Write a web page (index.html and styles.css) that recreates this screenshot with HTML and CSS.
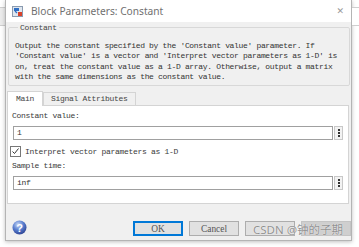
FILE: index.html
```html
<!DOCTYPE html>
<html lang="en">

<head>
    <meta charset="UTF-8">
    <meta name="viewport" content="width=device-width, initial-scale=1.0">
    <title>Block Parameters: Constant</title>
    <link rel="stylesheet" href="styles.css">
</head>

<body>
    <div class="desk">
        <div class="side side-left"></div>

        <div class="dialog">
            <div class="titlebar">
                <svg class="title-icon" width="11" height="11" viewBox="0 0 11 11">
                    <rect x="0.5" y="0.5" width="10" height="10" fill="#dfe6ee" stroke="#8a9bb0"/>
                    <path d="M2 2h5v3H2z" fill="#2f6fc4"/>
                    <path d="M3 5l2 2" stroke="#2f6fc4" stroke-width="1.2"/>
                    <rect x="6" y="6" width="4" height="4" fill="#d9422b"/>
                </svg>
                <span class="title-text">Block Parameters: Constant</span>
                <span class="close">&#x2715;</span>
            </div>

            <div class="body">
                <fieldset class="group">
                    <legend>Constant</legend>
                    <p class="desc">Output the constant specified by the 'Constant value' parameter. If
'Constant value' is a vector and 'Interpret vector parameters as 1-D' is
on, treat the constant value as a 1-D array. Otherwise, output a matrix
with the same dimensions as the constant value.</p>
                </fieldset>

                <div class="tabs">
                    <div class="tab active">Main</div>
                    <div class="tab">Signal Attributes</div>
                </div>

                <div class="pane">
                    <div class="field-label">Constant value:</div>
                    <div class="field-row">
                        <div class="input">1</div>
                        <div class="more"><span></span><span></span><span></span></div>
                    </div>

                    <div class="check-row">
                        <span class="checkbox">
                            <svg width="9" height="9" viewBox="0 0 9 9">
                                <path d="M1.5 4.5l2 2 4-5" fill="none" stroke="#333" stroke-width="1"/>
                            </svg>
                        </span>
                        <span>Interpret vector parameters as 1-D</span>
                    </div>

                    <div class="field-label">Sample time:</div>
                    <div class="field-row">
                        <div class="input">inf</div>
                        <div class="more"><span></span><span></span><span></span></div>
                    </div>
                </div>

                <div class="footer">
                    <svg class="help-icon" width="15" height="15" viewBox="0 0 15 15">
                        <defs>
                            <radialGradient id="hg" cx="0.4" cy="0.3" r="0.75">
                                <stop offset="0" stop-color="#c9d8f5"/>
                                <stop offset="0.5" stop-color="#5a7fd0"/>
                                <stop offset="1" stop-color="#2a3f8f"/>
                            </radialGradient>
                        </defs>
                        <circle cx="7.5" cy="7.5" r="7" fill="url(#hg)"/>
                        <text x="7.5" y="11.5" text-anchor="middle" font-family="Liberation Sans, sans-serif" font-size="11" font-weight="bold" fill="#fff">?</text>
                    </svg>
                    <div class="buttons">
                        <div class="btn default">OK</div>
                        <div class="btn">Cancel</div>
                        <div class="btn"></div>
                        <div class="btn disabled"></div>
                    </div>
                    <div class="watermark">CSDN @钟的子期</div>
                </div>
            </div>
        </div>

        <div class="side side-right"></div>
    </div>
</body>

</html>
```

FILE: styles.css
```css
body {
    margin: 0;
    padding: 0;
    background: #fff;
    font-family: "Liberation Mono", monospace;
    color: #333;
}

.desk {
    display: flex;
    width: 359px;
    height: 247px;
    overflow: hidden;
}

.side {
    border-top: 1px solid #cfcfcf;
    border-bottom: 1px solid #cfcfcf;
    margin-top: 7px;
    box-sizing: border-box;
    height: 19px;
}

.side-left {
    width: 5px;
    background: #ececec;
}

.side-right {
    flex: 1;
    background: #fff;
}

.dialog {
    width: 347px;
    height: 241px;
    border: 1px solid #b4b4b4;
    border-top: none;
    box-sizing: border-box;
    background: #f0f0f0;
    display: flex;
    flex-direction: column;
    box-shadow: 0 1px 4px rgba(0, 0, 0, 0.25);
}

.titlebar {
    height: 22px;
    background: #fff;
    display: flex;
    align-items: center;
    padding-left: 6px;
    font-family: "Noto Sans", sans-serif;
}

.title-icon {
    margin-right: 8px;
}

.title-text {
    font-size: 10.2px;
    color: #707070;
    flex: 1;
}

.close {
    font-family: "DejaVu Sans", sans-serif;
    font-size: 9px;
    color: #999;
    margin-right: 7px;
}

.body {
    flex: 1;
    display: flex;
    flex-direction: column;
    position: relative;
}

.group {
    margin: 1px 1px 0 2px;
    padding: 4px 0 0 6px;
    border: 1px solid #d8d8d8;
    border-radius: 2px;
    height: 63px;
    box-sizing: border-box;
}

.group legend {
    font-size: 8px;
    letter-spacing: -0.2px;
    padding: 0 2px;
    margin-left: 3px;
    color: #444;
}

.desc {
    margin: 5px 0 0 0;
    font-size: 8px;
    letter-spacing: -0.33px;
    line-height: 10.3px;
    white-space: pre;
    color: #333;
}

.tabs {
    display: flex;
    margin: 5px 0 0 1px;
    height: 14px;
    align-items: flex-end;
}

.tab {
    font-size: 8px;
    letter-spacing: -0.3px;
    padding: 0 7px;
    height: 12px;
    line-height: 12px;
    border: 1px solid #d4d4d4;
    border-bottom: none;
    background: #f0f0f0;
    color: #444;
}

.tab.active {
    height: 14px;
    line-height: 14px;
    padding: 0 8px;
    background: #fff;
    position: relative;
    z-index: 1;
    margin-bottom: -1px;
}

.pane {
    margin: 0 2px 0 1px;
    height: 99px;
    box-sizing: border-box;
    background: #fff;
    border: 1px solid #d4d4d4;
    padding: 4px 5px 0 4px;
    font-size: 8px;
    letter-spacing: -0.3px;
    color: #3a3a3a;
}

.field-label {
    height: 11px;
    line-height: 11px;
}

.field-row {
    display: flex;
    align-items: center;
    gap: 1px;
    margin-top: 5px;
}

.input {
    flex: 1;
    height: 14px;
    line-height: 12px;
    box-sizing: border-box;
    border: 1px solid #a0a0a0;
    padding-left: 3px;
    margin-left: 1px;
    color: #333;
}

.more {
    width: 7px;
    height: 12px;
    border: 1px solid #c8c8c8;
    background: #f2f2f2;
    display: flex;
    flex-direction: column;
    align-items: center;
    justify-content: center;
    gap: 1px;
}

.more span {
    width: 2px;
    height: 2px;
    background: #333;
}

.check-row {
    display: flex;
    align-items: center;
    gap: 4px;
    margin: 6px 0 3px -2px;
    height: 11px;
}

.checkbox {
    width: 9px;
    height: 9px;
    border: 1px solid #777;
    background: #fff;
    display: flex;
}

.footer {
    flex: 1;
    display: flex;
    align-items: flex-end;
    padding: 0 0 4px 6px;
}

.help-icon {
    margin-bottom: 1px;
}

.buttons {
    display: flex;
    gap: 6px;
    margin-left: auto;
    margin-right: 0;
}

.btn {
    width: 50px;
    height: 15px;
    box-sizing: border-box;
    border: 1px solid #adadad;
    background: #e1e1e1;
    font-family: "Liberation Serif", serif;
    font-size: 9.4px;
    color: #555;
    display: flex;
    align-items: center;
    justify-content: center;
}

.btn.default {
    border: 1px solid #0078d7;
    box-shadow: inset 0 0 0 1px #0078d7;
}

.btn.disabled {
    background: #cfcfcf;
    border-color: #c4c4c4;
}

.watermark {
    position: absolute;
    right: 8px;
    bottom: 3px;
    font-family: "Noto Sans", "Noto Sans CJK SC", sans-serif;
    font-size: 11.5px;
    color: rgba(125, 125, 125, 0.85);
    text-shadow: 0 0 1px #fff;
}
```
